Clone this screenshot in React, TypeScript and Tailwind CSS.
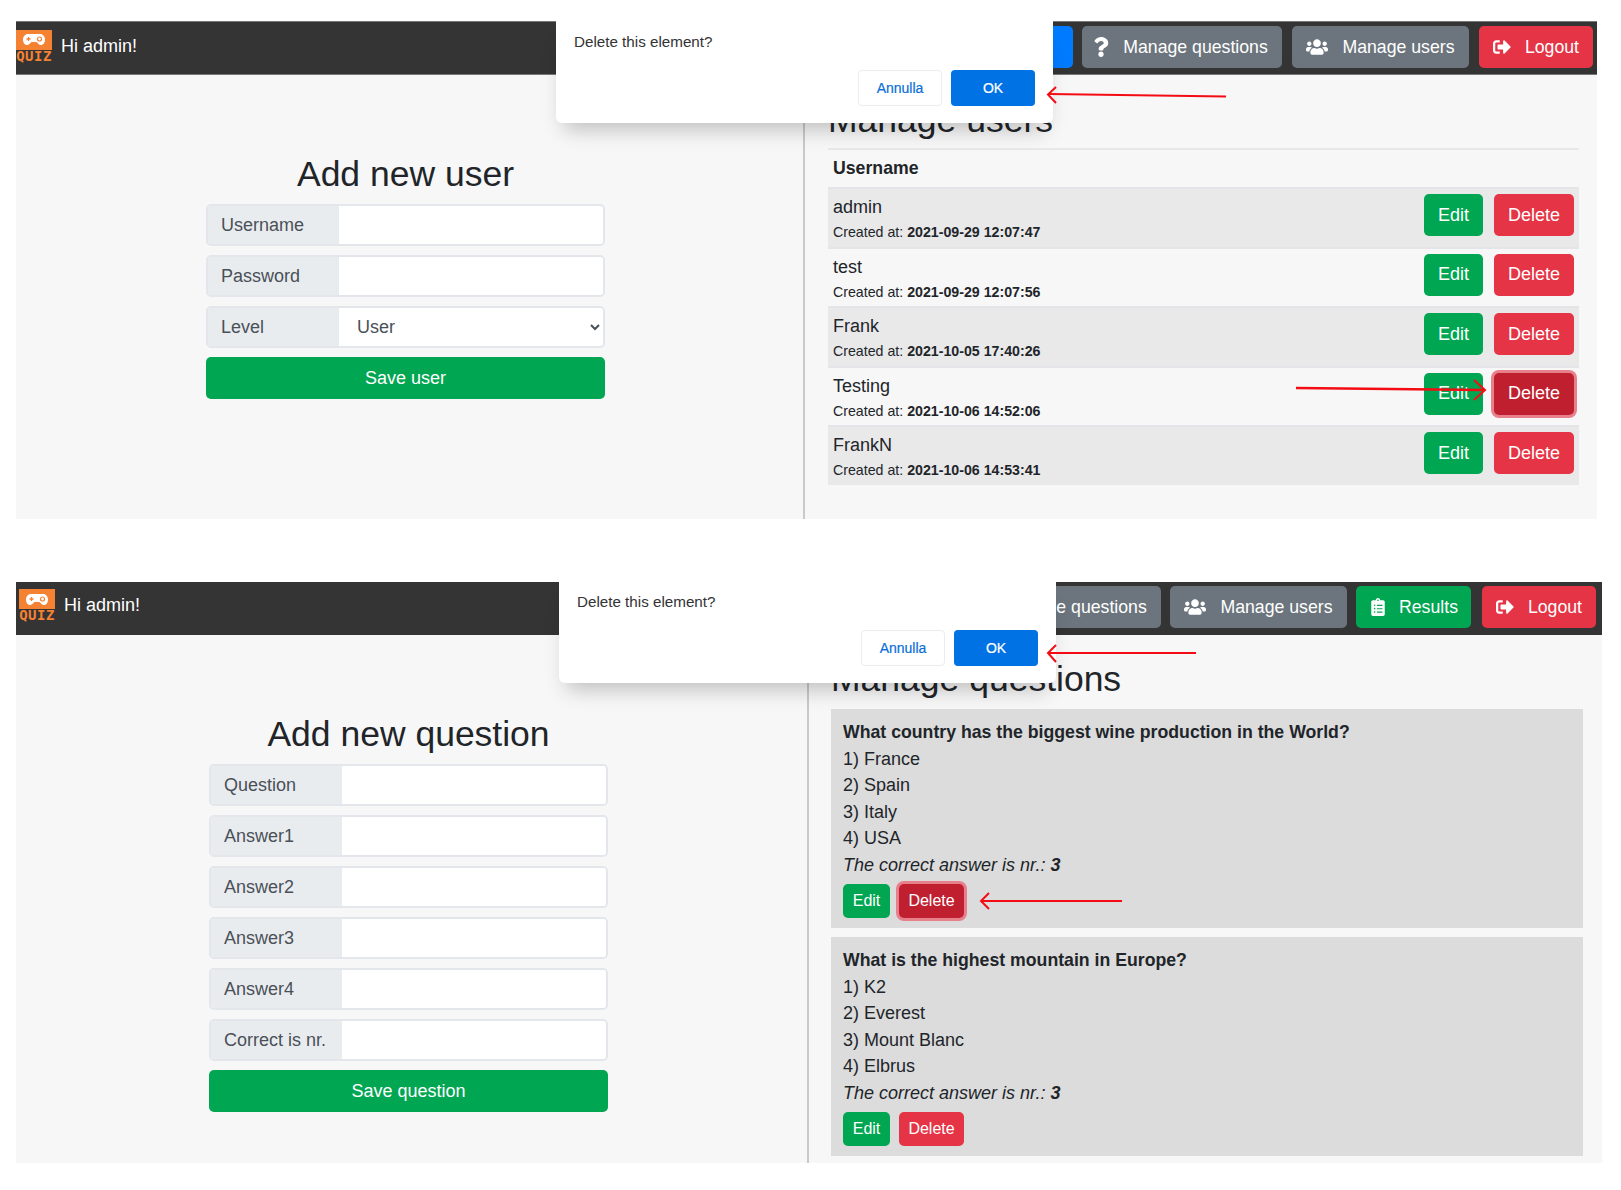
import React from "react";
import { FaQuestion, FaUsers, FaSignOutAlt, FaClipboardList, FaGamepad } from "react-icons/fa";

const sans = "font-['Liberation_Sans',Arial,sans-serif]";

function Logo({ className = "" }: { className?: string }) {
  return (
    <div className={`w-[36px] shrink-0 flex flex-col items-center ${className}`}>
      <div className="w-[36px] h-[20px] bg-[#f58233] flex items-center justify-center">
        <svg width="24" height="13" viewBox="0 0 24 13">
          <path d="M6 1h12c3 0 5 2.500 5 5.500S21.500 12 19 12c-2 0-3-1.500-4.500-3h-5C8 10.500 7 12 5 12 2.500 12 1 9.500 1 6.500S3 1 6 1z" fill="#fff" />
          <path d="M6.500 4v4M4.500 6h4" stroke="#f58233" strokeWidth="1.300" />
          <circle cx="17.500" cy="6" r="2" fill="none" stroke="#f58233" strokeWidth="1.200" />
        </svg>
      </div>
      <div className="font-['DejaVu_Sans_Mono',monospace] font-bold text-[14px] leading-[11px] mt-[1px] tracking-[0.5px] text-[#f58233] whitespace-nowrap">QUIZ</div>
    </div>
  );
}

function NavBtn({ icon, label, color, width, iconGap = "gap-[14px]", className = "" }: { icon: React.ReactNode; label: string; color: string; width: string; iconGap?: string; className?: string }) {
  return (
    <button className={`h-[42px] ${width} ${color} ${iconGap} ${className} rounded-[5px] text-white text-[17.700px] flex items-center justify-center shrink-0 whitespace-nowrap`}>
      {icon}
      <span>{label}</span>
    </button>
  );
}

function Modal({ left, height, textTop }: { left: string; height: string; textTop: string }) {
  return (
    <div className={`absolute top-0 ${left} ${height} w-[497px] bg-white rounded-b-[6px] shadow-[0_14px_20px_-8px_rgba(0,0,0,0.24)] z-10 px-[18px] ${textTop}`}>
      <div className="text-[15.200px] leading-[20px] text-[#333]">Delete this element?</div>
      <div className="flex justify-end gap-[9px] mt-[18px]">
        <button className="w-[84px] h-[36px] rounded-[4px] bg-white border border-[#ececec] text-[14px] font-medium text-[#0a6fd8] [-webkit-text-stroke:0.2px_#0a6fd8]">Annulla</button>
        <button className="w-[84px] h-[36px] rounded-[4px] bg-[#0072e3] text-[14px] font-medium text-white [-webkit-text-stroke:0.2px_#fff]">OK</button>
      </div>
    </div>
  );
}

function Field({ label, select }: { label: string; select?: boolean }) {
  return (
    <div className="flex h-[42px] border-2 border-[#e3e6ea] rounded-[5px] overflow-hidden">
      <div className="w-[131px] shrink-0 bg-[#e9ecef] pl-[13px] flex items-center text-[18px] text-[#495057]">{label}</div>
      {select ? (
        <select defaultValue="User" className="flex-1 min-w-0 bg-white pl-[14px] text-[18px] text-[#495057] outline-none">
          <option>User</option>
          <option>Admin</option>
        </select>
      ) : (
        <input aria-label={label} className="flex-1 min-w-0 bg-white outline-none" />
      )}
    </div>
  );
}

function FormCol({ title, fields, save, className }: { title: string; fields: { label: string; select?: boolean }[]; save: string; className: string }) {
  return (
    <div className={`shrink-0 border-r-2 border-[#c9c9c9] ${className}`}>
      <div className="w-[399px]">
        <h2 className="text-[35.500px] leading-[43px] text-[#212529] text-center mb-[8px] whitespace-nowrap">{title}</h2>
        <div className="flex flex-col gap-[9px]">
          {fields.map((f) => (
            <Field key={f.label} {...f} />
          ))}
          <button className="h-[42px] rounded-[5px] bg-[#00a651] text-white text-[18px]">{save}</button>
        </div>
      </div>
    </div>
  );
}

function Btn({ label, kind, active, small }: { label: string; kind: "edit" | "delete"; active?: boolean; small?: boolean }) {
  const size = small
    ? kind === "edit" ? "w-[47px] h-[34px] text-[16px]" : "w-[65px] h-[34px] text-[16px]"
    : kind === "edit" ? "w-[59px] h-[42px] text-[18px]" : "w-[80px] h-[42px] text-[18px]";
  const color = kind === "edit"
    ? "bg-[#00a651]"
    : active
      ? "bg-[#c01f30] ring-[3px] ring-[#e8808b]"
      : "bg-[#e53445]";
  return <button className={`${size} ${color} rounded-[5px] text-white shrink-0`}>{label}</button>;
}

const users = [
  ["admin", "2021-09-29 12:07:47"],
  ["test", "2021-09-29 12:07:56"],
  ["Frank", "2021-10-05 17:40:26"],
  ["Testing", "2021-10-06 14:52:06"],
  ["FrankN", "2021-10-06 14:53:41"],
];

function UserRow({ name, date, i }: { name: string; date: string; i: number }) {
  return (
    <div className={`h-[59.5px] flex justify-between pl-[5px] pr-[5px] pt-[5px] border-t-2 border-[#e3e5e8] ${i % 2 === 0 ? "bg-[#e9e9e9]" : ""}`}>
      <div className="text-[#212529]">
        <div className="text-[18px] leading-[22px] mt-[2px]">{name}</div>
        <div className="text-[14.200px] leading-[20px] mt-[4px]">
          Created at: <b>{date}</b>
        </div>
      </div>
      <div className="flex gap-[11px]">
        <Btn label="Edit" kind="edit" />
        <Btn label="Delete" kind="delete" active={i === 3} />
      </div>
    </div>
  );
}

function QuestionCard({ q, answers, active }: { q: string; answers: string[]; active?: boolean }) {
  return (
    <div className="bg-[#dcdcdc] h-[219px] px-[12px] pt-[10px] text-[18px] leading-[26.500px] text-[#212529]">
      <div className="font-bold text-[17.700px]">{q}</div>
      {answers.map((a, i) => (
        <div key={a}>
          {i + 1}) {a}
        </div>
      ))}
      <div className="italic">
        The correct answer is nr.: <b>3</b>
      </div>
      <div className="flex gap-[9px] mt-[6px]">
        <Btn small label="Edit" kind="edit" />
        <Btn small label="Delete" kind="delete" active={active} />
      </div>
    </div>
  );
}

function Arrow({ line, head, width }: { line: string; head: string; width: number }) {
  return (
    <g fill="none" stroke="#f40c14" strokeWidth={width}>
      <path d={line} />
      <path d={head} strokeWidth="2" />
    </g>
  );
}

export default function App() {
  return (
    <div className={`min-h-[1190px] bg-white pt-[21px] pl-[16px] ${sans}`}>
      <section className="relative w-[1581px] h-[498px] bg-[#f7f7f7]">
        <header className="h-[54px] bg-[#343434] flex items-center justify-between pr-[4px] border-y border-[#777]">
          <div className="flex items-center gap-[9px] mt-[-4px]">
            <Logo className="mt-[-1px]" />
            <span className="text-white text-[18px]">Hi admin!</span>
          </div>
          <nav className="flex items-center gap-[9px] mt-[-2px]">
            <NavBtn icon={<FaGamepad size={20} />} label="Quiz" color="bg-[#007bff]" width="w-[110px]" />
            <NavBtn icon={<FaQuestion size={20} />} label="Manage questions" color="bg-[#6c757d]" width="w-[200px]" iconGap="gap-[12px]" className="pr-[5px]" />
            <NavBtn icon={<FaUsers size={22} />} label="Manage users" color="bg-[#6c757d]" width="w-[177px]" className="ml-[1px]" />
            <NavBtn icon={<FaSignOutAlt size={18} />} label="Logout" color="bg-[#e53445]" width="w-[114px]" className="ml-[1px]" />
          </nav>
        </header>
        <div className="flex h-[444px]">
          <FormCol
            title="Add new user"
            className="w-[789px] pl-[190px] pt-[78px]"
            save="Save user"
            fields={[{ label: "Username" }, { label: "Password" }, { label: "Level", select: true }]}
          />
          <div className="flex-1 pl-[23px] pr-[18px] pt-[24px]">
            <h2 className="text-[35.500px] leading-[43px] text-[#212529] whitespace-nowrap">Manage users</h2>
            <div className="border-t-2 border-[#e6e8ea] mt-[6px]" />
            <div className="h-[37px] pl-[5px] flex items-center text-[17.700px] font-bold text-[#212529]">Username</div>
            {users.map(([name, date], i) => (
              <UserRow key={name} name={name} date={date} i={i} />
            ))}
          </div>
        </div>
        <Modal left="left-[540px]" height="h-[102px]" textTop="pt-[11px]" />
        <svg className="absolute inset-0 w-full h-full pointer-events-none z-20" viewBox="16 21 1581 498">
          <Arrow width={2} line="M1226 96.500L1049 94" head="M1056 87L1048 94.500L1056 103" />
          <Arrow width={2.6} line="M1296 388L1484 390" head="M1474 380L1485 390L1474 400" />
        </svg>
      </section>

      <section className="relative w-[1586px] h-[581px] mt-[63px] bg-[#f7f7f7]">
        <header className="h-[53px] bg-[#343434] flex items-center justify-between pr-[6px]">
          <div className="flex items-center gap-[9px] pl-[3px] mt-[-6px]">
            <Logo className="mt-[-1px]" />
            <span className="text-white text-[18px]">Hi admin!</span>
          </div>
          <nav className="flex items-center gap-[9px] mt-[-3px]">
            <NavBtn icon={<FaQuestion size={20} />} label="Manage questions" color="bg-[#6c757d]" width="w-[200px]" iconGap="gap-[12px]" className="pr-[5px]" />
            <NavBtn icon={<FaUsers size={22} />} label="Manage users" color="bg-[#6c757d]" width="w-[177px]" />
            <NavBtn icon={<FaClipboardList size={18} />} label="Results" color="bg-[#00a651]" width="w-[115px]" iconGap="gap-[12px]" />
            <NavBtn icon={<FaSignOutAlt size={18} />} label="Logout" color="bg-[#e53445]" width="w-[114px]" className="ml-[2px]" />
          </nav>
        </header>
        <div className="flex h-[528px]">
          <FormCol
            title="Add new question"
            className="w-[793px] pl-[193px] pt-[78px]"
            save="Save question"
            fields={[
              { label: "Question" },
              { label: "Answer1" },
              { label: "Answer2" },
              { label: "Answer3" },
              { label: "Answer4" },
              { label: "Correct is nr." },
            ]}
          />
          <div className="flex-1 pl-[22px] pr-[19px] pt-[23px]">
            <h2 className="text-[35.500px] leading-[43px] text-[#212529] mb-[8px] whitespace-nowrap">Manage questions</h2>
            <div className="flex flex-col gap-[9px]">
              <QuestionCard q="What country has the biggest wine production in the World?" answers={["France", "Spain", "Italy", "USA"]} active />
              <QuestionCard q="What is the highest mountain in Europe?" answers={["K2", "Everest", "Mount Blanc", "Elbrus"]} />
            </div>
          </div>
        </div>
        <Modal left="left-[543px]" height="h-[101px]" textTop="pt-[10px]" />
        <svg className="absolute inset-0 w-full h-full pointer-events-none z-20" viewBox="16 582 1586 581">
          <Arrow width={1.8} line="M1196 653L1049 653" head="M1056 645L1048 653L1056 662" />
          <Arrow width={1.8} line="M1122 901L982 901" head="M989 893L981 901L989 909" />
        </svg>
      </section>
    </div>
  );
}
